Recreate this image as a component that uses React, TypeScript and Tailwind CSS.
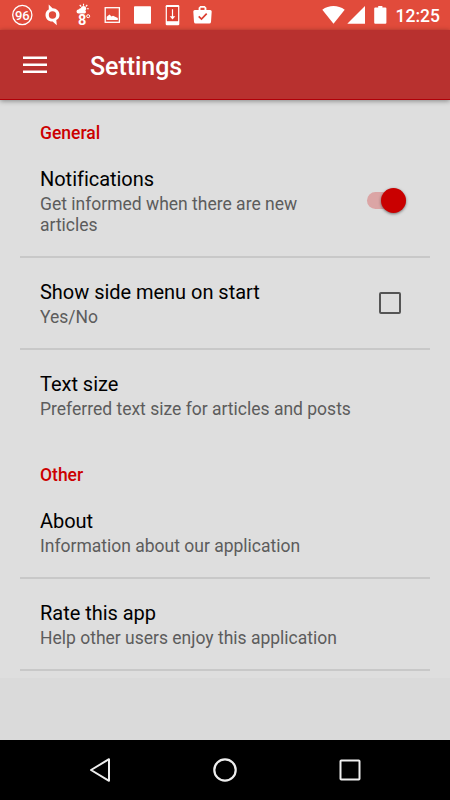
import React, { useState } from 'react'

interface IRowProps {
    title: string
    summary: string
    divider?: boolean
    children?: React.ReactNode
}

function StatusIcon({ children }: { children: React.ReactNode }) {
    return (
        <svg width="30" height="30" viewBox="0 0 30 30" fill="#fff" className="shrink-0">
            {children}
        </svg>
    )
}

function StatusBar() {
    return (
        <div className="flex h-[30px] items-center justify-between bg-[#e14b3b] pr-[10px] pl-[7px] text-white">
            <div className="flex">
                <StatusIcon>
                    <circle cx="15.3" cy="15" r="9.6" fill="none" stroke="#fff" strokeWidth="1.3" />
                    <text x="15.3" y="19.6" fontSize="13" fontWeight="500" textAnchor="middle">
                        96
                    </text>
                </StatusIcon>
                <StatusIcon>
                    <path
                        fillRule="evenodd"
                        d="M11.7 4.6 15.5 8.3C19.5 8.2 22.500 11.200 22.500 15c0 2.600-1.400 4.300-3.200 5.100l.5 5.100-4.200-3.600C11.500 21.800 8.500 18.800 8.500 15c0-2.600 1.400-4.500 3.300-5.400ZM15.500 11.300a3.700 3.700 0 1 0 0 7.400 3.700 3.700 0 0 0 0-7.400Z"
                    />
                </StatusIcon>
                <StatusIcon>
                    <circle cx="16.500" cy="8.500" r="2.600" />
                    <path d="M16.500 3.800v2M20.300 5l-1.500 1.500M21.800 8.800h-2M12.700 5l1.500 1.500" stroke="#fff" strokeWidth="1.100" />
                    <path d="M11.500 13.500a2 2 0 0 1 0-4 3.200 3.200 0 0 1 5.800.8 1.600 1.600 0 0 1 .2 3.200Z" />
                    <text x="15.200" y="25" fontSize="14.500" fontWeight="700" textAnchor="middle">
                        8
                    </text>
                    <circle cx="21.200" cy="16.200" r="1.500" fill="none" stroke="#fff" strokeWidth="1" />
                </StatusIcon>
                <StatusIcon>
                    <rect x="8.200" y="7.700" width="14.200" height="14.600" fill="none" stroke="#fff" strokeWidth="1.300" />
                    <path d="M9.700 20v-3.200l2.800-2.300 2 2 1.500-.8 4.800 2.300v2Z" />
                </StatusIcon>
                <StatusIcon>
                    <rect x="7" y="6.200" width="17" height="17.500" rx=".8" />
                </StatusIcon>
                <StatusIcon>
                    <rect x="8.700" y="5" width="13.600" height="20.200" rx="1.200" />
                    <path fill="#dc3f31" d="M9.900 7h11.200v14.200H9.900Z" />
                    <path d="M14.900 9.300h1.200v7h2.200l-2.800 3.200-2.800-3.200h2.200Z" />
                </StatusIcon>
                <StatusIcon>
                    <path
                        fillRule="evenodd"
                        d="M13.300 6h4.400l1.700 1.700V10h3.800q1.500 0 1.500 1.500L24 22q-.2 1.500-1.700 1.500H8.700q-1.500 0-1.700-1.500L6.300 11.500Q6.300 10 7.800 10h3.800V7.700ZM13.500 7.800V10h4V7.800Z"
                    />
                    <path d="m11.700 16.300 2.800 2.700 5.200-5.300" fill="none" stroke="#dc3f31" strokeWidth="1.700" />
                </StatusIcon>
            </div>
            <div className="flex items-center">
                <svg width="68" height="30" viewBox="0 0 68 30" fill="#fff" className="mr-[6px]">
                    <path d="M.3 9.700C6.900 4.700 16.100 4.700 22.700 9.700L11.500 23.700Z" />
                    <path d="M25.500 23.700V23.400L43 6v17.700Z" />
                    <path d="M56.200 6h4.200v1.600h3q1 0 1 1v14.200q0 1-1 1H53.200q-1 0-1-1V8.600q0-1 1-1h3Z" />
                </svg>
                <span className="pt-px text-[17.5px] leading-[30px] font-medium">12:25</span>
            </div>
        </div>
    )
}

function SectionHeading({ children }: { children: React.ReactNode }) {
    return <h2 className="pl-5 text-[17.5px] leading-5 font-medium text-[#cc0000]">{children}</h2>
}

function PreferenceRow({ title, summary, divider = false, children }: IRowProps) {
    return (
        <div className={divider ? 'border-b-2 border-[#c8c8c8]' : 'pb-0.5'}>
            <div className="flex items-center justify-between pt-[22px] pr-[23px] pb-[20.5px] pl-5">
                <div className={children ? 'w-[280px] shrink-0' : 'shrink-0'}>
                    <div className="text-[20px] leading-6 tracking-[-0.03px] text-black">{title}</div>
                    <div className="mt-[3px] text-[17.5px] leading-[20.5px] text-[#5c5c5c]">{summary}</div>
                </div>
                {children}
            </div>
        </div>
    )
}

function NavigationBar() {
    return (
        <div className="flex h-[60px] items-center justify-between bg-black px-[84px]">
            <svg width="32" height="32" viewBox="0 0 32 32" fill="none" stroke="#eee" strokeWidth="2">
                <path d="M25 5.200v21.600L7 16Z" strokeLinejoin="round" />
            </svg>
            <svg width="32" height="32" viewBox="0 0 32 32" fill="none" stroke="#eee" strokeWidth="2.200">
                <circle cx="16" cy="16" r="10.700" />
            </svg>
            <svg width="32" height="32" viewBox="0 0 32 32" fill="none" stroke="#eee" strokeWidth="2">
                <rect x="6.500" y="6.500" width="19" height="19" rx=".8" />
            </svg>
        </div>
    )
}

export default function App() {
    const [notifications, setNotifications] = useState(true)
    const [sideMenu, setSideMenu] = useState(false)

    return (
        <div className="flex h-[800px] w-[450px] flex-col overflow-hidden bg-[#dadada] font-[Roboto,sans-serif]">
            <StatusBar />
            <header className="relative flex h-[70px] shrink-0 items-center border-b border-[#b00008] bg-[#b8312f] pl-[23px] text-white shadow-[0_1px_5px_rgba(0,0,0,0.4)]">
                <svg width="24" height="18" viewBox="0 0 24 18" fill="#fff">
                    <path d="M0 .5h24v2.600H0ZM0 7.500h24v2.600H0ZM0 14.500h24v2.600H0Z" />
                </svg>
                <h1 className="ml-[43px] pt-[5px] text-[25px] leading-8 font-medium tracking-[-0.05px]">Settings</h1>
            </header>
            <main className="flex-1">
                <div className="h-[578px] bg-[#dedede] px-5 pt-[22.5px]">
                    <SectionHeading>General</SectionHeading>
                    <div className="mt-[2.5px]">
                        <PreferenceRow title="Notifications" summary="Get informed when there are new articles" divider>
                            <button
                                role="switch"
                                aria-checked={notifications}
                                aria-label="Notifications"
                                onClick={() => setNotifications(!notifications)}
                                className={`mr-[1.5px] mb-px flex h-[17px] w-[39px] items-center rounded-full bg-[#dba5a5] ${notifications ? 'justify-end' : 'justify-start'}`}
                            >
                                <span className="size-[25px] shrink-0 rounded-full bg-[#c90000] shadow-[0_1px_3px_rgba(0,0,0,0.5)]" />
                            </button>
                        </PreferenceRow>
                        <PreferenceRow title="Show side menu on start" summary="Yes/No" divider>
                            <button
                                role="checkbox"
                                aria-checked={sideMenu}
                                aria-label="Show side menu on start"
                                onClick={() => setSideMenu(!sideMenu)}
                                className={`mr-[6px] mb-px size-[22px] rounded-[2px] border-2 border-[#555] ${sideMenu ? 'bg-[#c90000]' : ''}`}
                            />
                        </PreferenceRow>
                        <PreferenceRow title="Text size" summary="Preferred text size for articles and posts" />
                    </div>
                    <div className="mt-[23px]">
                        <SectionHeading>Other</SectionHeading>
                    </div>
                    <div className="mt-[2.5px]">
                        <PreferenceRow title="About" summary="Information about our application" divider />
                        <PreferenceRow title="Rate this app" summary="Help other users enjoy this application" divider />
                    </div>
                </div>
            </main>
            <NavigationBar />
        </div>
    )
}
